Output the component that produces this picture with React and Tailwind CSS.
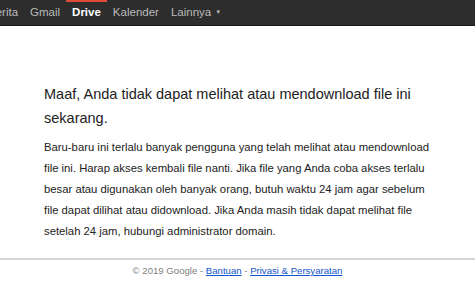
export default function App() {
  const navItems = ['Berita', 'Gmail', 'Drive', 'Kalender']

  return (
    <div className="min-h-[300px] bg-white font-['Liberation_Sans',Arial,sans-serif]">
      {/* Top bar */}
      <div className="h-[26px] bg-[#2d2d2d] border-b border-[#1a1a1a] overflow-hidden">
        <div className="flex items-center h-full ml-[-18px] text-[11.5px] text-[#bbbbbb]">
          {navItems.map((item) => (
            <div
              key={item}
              className={
                item === 'Drive'
                  ? 'relative px-[6px] h-full flex items-center font-bold text-white'
                  : 'px-[6px] h-full flex items-center'
              }
            >
              {item === 'Drive' && (
                <span className="absolute left-0 right-0 top-0 h-[2px] bg-[#dd4b39]" />
              )}
              {item}
            </div>
          ))}
          <div className="px-[6px] h-full flex items-center gap-[4px]">
            Lainnya
            <span className="text-[6px]">▼</span>
          </div>
        </div>
      </div>

      {/* Message */}
      <div className="pl-[44px] pr-[40px] pt-[56px] pb-[16px] border-b-2 border-[#d4d4d4]">
        <h1 className="text-[14.5px] leading-[24px] text-[#222222] max-w-[380px]">
          Maaf, Anda tidak dapat melihat atau mendownload file ini sekarang.
        </h1>
        <p className="mt-[7px] text-[11.3px] leading-[21px] text-[#222222] max-w-[392px]">
          Baru-baru ini terlalu banyak pengguna yang telah melihat atau mendownload file ini. Harap
          akses kembali file nanti. Jika file yang Anda coba akses terlalu besar atau digunakan oleh
          banyak orang, butuh waktu 24 jam agar sebelum file dapat dilihat atau didownload. Jika
          Anda masih tidak dapat melihat file setelah 24 jam, hubungi administrator domain.
        </p>
      </div>

      {/* Footer */}
      <div className="pt-[4px] text-center text-[9.6px] leading-[14px] text-[#808080]">
        © 2019 Google -{' '}
        <a href="#" className="text-[#1155cc] underline">
          Bantuan
        </a>{' '}
        -{' '}
        <a href="#" className="text-[#1155cc] underline">
          Privasi &amp; Persyaratan
        </a>
      </div>
    </div>
  )
}
